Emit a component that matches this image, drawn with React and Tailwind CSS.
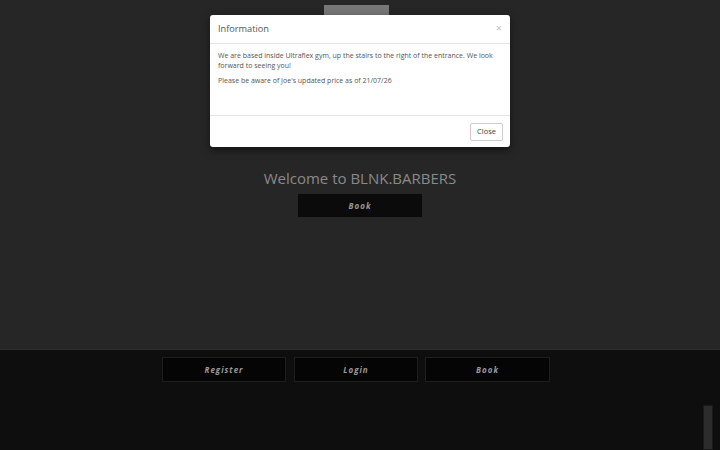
export default function App() {
  const font = { fontFamily: '"Open Sans", "Noto Sans", sans-serif' }
  return (
    <div className="relative w-[720px] h-[450px] overflow-hidden bg-[#0e0e0e]" style={font}>
      <section className="relative h-[350px] bg-[#262626] border-b border-[#2e2e2e] flex flex-col items-center">
        <div className="mt-[5px] self-start ml-[324px] w-[65px] h-[11px] bg-[#777777]" />
        <h1 className="mt-[152px] text-[15px] leading-[20px] text-[#8a8a8a]">Welcome to BLNK.BARBERS</h1>
        <button className="mt-[6px] w-[124px] h-[23px] bg-[#0b0b0b] text-[8px] font-bold italic tracking-[1px] text-[#9a9a9a]">
          Book
        </button>
      </section>

      <footer className="flex pl-[162px] pt-[7px]">
        <button className="w-[124px] h-[25px] bg-[#050505] border border-[#1e1e1e] text-[8px] font-bold italic tracking-[1px] text-[#9a9a9a]">
          Register
        </button>
        <button className="ml-[8px] w-[124px] h-[25px] bg-[#050505] border border-[#1e1e1e] text-[8px] font-bold italic tracking-[1px] text-[#9a9a9a]">
          Login
        </button>
        <button className="ml-[7px] w-[125px] h-[25px] bg-[#050505] border border-[#1e1e1e] text-[8px] font-bold italic tracking-[1px] text-[#9a9a9a]">
          Book
        </button>
      </footer>

      <div className="absolute left-[703px] top-[405px] w-[10px] h-[45px] bg-[#2c2c2c] border border-[#1a1a1a]" />

      <div className="absolute left-[210px] top-[15px] w-[300px] h-[132px] bg-white rounded-[3px] shadow-[0_3px_9px_rgba(0,0,0,0.5)] flex flex-col">
        <div className="h-[29px] flex items-center justify-between px-[8px] border-b border-[#e5e5e5]">
          <span className="text-[9.2px] text-[#555555]">Information</span>
          <span className="text-[11px] leading-none text-[#c0c0c0] -mt-[4px]">×</span>
        </div>
        <div className="flex-1 px-[8px] pt-[7px] text-[7px] leading-[10px] text-[#555555]">
          <p>We are based inside Ultraflex gym, up the stairs to the right of the entrance. We look forward to seeing you!</p>
          <p className="mt-[5px]">Please be aware of Joe's updated price as of 21/07/26</p>
        </div>
        <div className="h-[32px] flex items-center justify-end px-[7px] border-t border-[#e5e5e5]">
          <button className="h-[18px] px-[6px] bg-white border border-[#cccccc] rounded-[2px] text-[7.5px] text-[#444444]">
            Close
          </button>
        </div>
      </div>
    </div>
  )
}
